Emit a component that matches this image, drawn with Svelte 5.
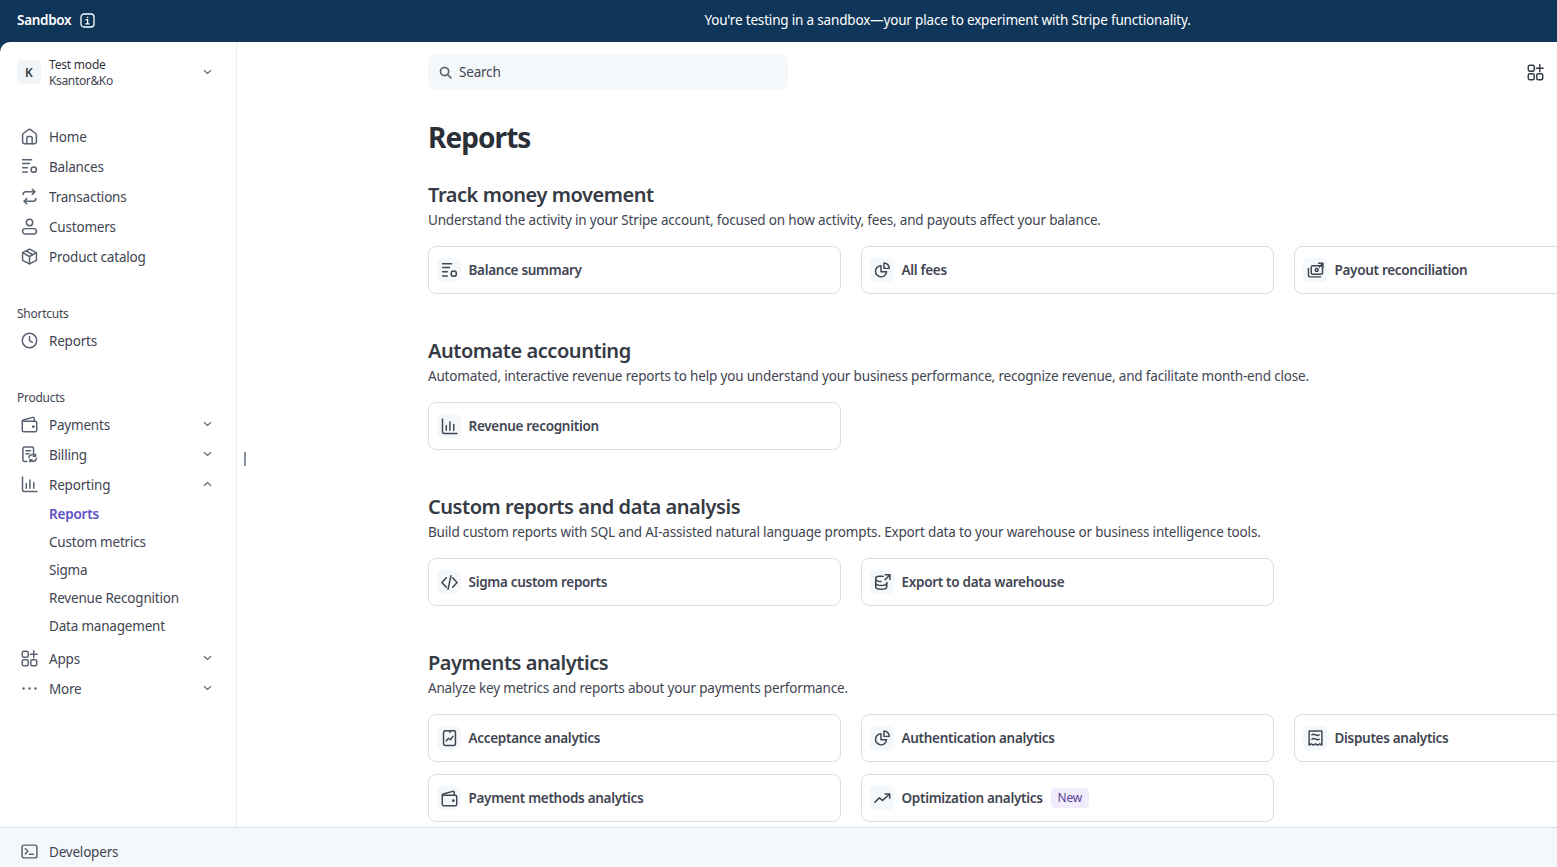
<script>
	const icons = {
		home: '<path d="M1.5 6.6a1.8 1.8 0 0 1 .7-1.4L7 1.5a1.6 1.6 0 0 1 2 0l4.8 3.7a1.8 1.8 0 0 1 .7 1.4V13a1.8 1.8 0 0 1-1.8 1.8H3.3A1.8 1.8 0 0 1 1.5 13Z"/><path d="M5.5 14.8V9.5A1.5 1.5 0 0 1 7 8h2a1.5 1.5 0 0 1 1.5 1.5v5.3"/>',
		balances: '<path d="M1.5 1.6h8.5M1.5 5.2h6.5M1.5 9.2h4.5M1.5 13.2h4.5"/><circle cx="12" cy="11" r="2.5"/>',
		transactions: '<path d="M2 6.2c0-1.6 1-2.6 2.6-2.6H13M10.6 1.2 13.2 3.6l-2.6 2.4M14 9.8c0 1.6-1 2.6-2.6 2.6H3M5.4 14.8 2.8 12.4l2.6-2.4"/>',
		customers: '<circle cx="8" cy="4.2" r="3"/><rect x="1.5" y="10" width="13" height="5" rx="2.5"/>',
		product: '<path d="M8 1 14.5 4.4v7.2L8 15 1.5 11.6V4.4L8 1Z"/><path d="M1.8 4.6 8 8l6.2-3.4M8 8v7M4.8 2.8l6.4 3.4"/>',
		clock: '<circle cx="8" cy="8" r="6.8"/><path d="M8 4.2V8.2l2.6 1.6"/>',
		wallet: '<path d="M1.2 5v8.3c0 .9.7 1.5 1.5 1.5h10.6c.8 0 1.5-.6 1.5-1.5V6.4c0-.8-.7-1.4-1.5-1.4H2.4"/><path d="M1.2 5c0-.6.4-1.1 1-1.3L11 1.3c.7-.2 1.5.3 1.5 1.1V5"/><circle cx="11.6" cy="10" r=".6" fill="currentColor"/>',
		billing: '<path d="M5.5 14.5H3.2a1.4 1.4 0 0 1-1.4-1.4V2.4A1.4 1.4 0 0 1 3.2 1h7.2a1.4 1.4 0 0 1 1.4 1.4v4.4"/><path d="M4.6 4.4h4.4M4.6 7.4h3"/><path d="M7.4 11a3.4 3.4 0 0 1 6-1.6M14.6 11.4a3.4 3.4 0 0 1-6 1.8M13.6 7.6v2h-2M8.4 15v-2h2"/>',
		reporting: '<path d="M1.4 1v12.2c0 .8.6 1.4 1.4 1.4H15M5 7v4.6M8.4 3.8v7.8M12 6v5.6"/>',
		apps: '<rect x="1.2" y="1.2" width="5.6" height="5.6" rx="1.4"/><rect x="1.2" y="9.2" width="5.6" height="5.6" rx="1.4"/><rect x="9.2" y="9.2" width="5.6" height="5.6" rx="1.4"/><path d="M12 .8v6.4M8.8 4h6.4"/>',
		fees: '<path d="M6.6 3.6a5.2 5.2 0 1 0 5.2 5.6H6.6V3.6Z"/><path d="M9.4 1a5 5 0 0 1 5 5H9.4V1Z"/>',
		payout: '<rect x="4" y="3.6" width="10.6" height="8" rx="1.4"/><circle cx="9.2" cy="7.6" r="1.4"/><path d="M1.4 6.2v6.4c0 .9.6 1.4 1.4 1.4h10M11 1.2h4v4M15 1.2l-3.4 3.4"/>',
		code: '<path d="M5 3.6.9 8 5 12.4M11 3.6 15.1 8 11 12.4M9.4 1.6 6.6 14.4"/>',
		warehouse: '<path d="M8.6 2.2H5C3 2.2 1.6 3.1 1.6 4.6V12c0 1.5 1.6 2.4 5.2 2.4s5.2-.9 5.2-2.4V8"/><path d="M1.6 4.6c0 1.5 1.6 2.4 5 2.4M1.6 8.4c0 1.5 1.6 2.4 5.2 2.4s5.2-.9 5.2-2.4M10.6.8H15v4.4M15 .8l-4.6 4.6"/>',
		acceptance: '<rect x="2.4" y=".6" width="11.2" height="14" rx="1.8"/><path d="M8.6.6v1.8M5 10.2l2-2.4 1.8 1.4L11.2 6"/>',
		disputes: '<path d="M2 1h12v13.2l-2-1.2-2 1.2-2-1.2-2 1.2-2-1.2-2 1.2V1Z"/><path d="M4.6 4.6c1.1-.8 2-.8 3.4 0s2.3.8 3.4 0M4.6 8.6c1.1-.8 2-.8 3.4 0s2.3.8 3.4 0"/>',
		trend: '<path d="M.8 11.6 5 7.4l3 2.4 6.4-5.6M10.4 3.8h4.4v4"/>',
		terminal: '<rect x="1" y="2" width="14" height="12" rx="2"/><path d="m4 5.4 2.6 2.4L4 10.2M8 10.6h3.6"/>'
	};

	const primary = [
		{ icon: 'home', label: 'Home' },
		{ icon: 'balances', label: 'Balances' },
		{ icon: 'transactions', label: 'Transactions' },
		{ icon: 'customers', label: 'Customers' },
		{ icon: 'product', label: 'Product catalog' }
	];

	const reportingLinks = ['Custom metrics', 'Sigma', 'Revenue Recognition', 'Data management'];

	const sections = [
		{
			title: 'Track money movement',
			desc: 'Understand the activity in your Stripe account, focused on how activity, fees, and payouts affect your balance.',
			cards: [
				{ icon: 'balances', label: 'Balance summary' },
				{ icon: 'fees', label: 'All fees' },
				{ icon: 'payout', label: 'Payout reconciliation' }
			]
		},
		{
			title: 'Automate accounting',
			desc: 'Automated, interactive revenue reports to help you understand your business performance, recognize revenue, and facilitate month-end close.',
			cards: [{ icon: 'reporting', label: 'Revenue recognition' }]
		},
		{
			title: 'Custom reports and data analysis',
			desc: 'Build custom reports with SQL and AI-assisted natural language prompts. Export data to your warehouse or business intelligence tools.',
			cards: [
				{ icon: 'code', label: 'Sigma custom reports' },
				{ icon: 'warehouse', label: 'Export to data warehouse' }
			]
		},
		{
			title: 'Payments analytics',
			desc: 'Analyze key metrics and reports about your payments performance.',
			cards: [
				{ icon: 'acceptance', label: 'Acceptance analytics' },
				{ icon: 'fees', label: 'Authentication analytics' },
				{ icon: 'disputes', label: 'Disputes analytics' },
				{ icon: 'wallet', label: 'Payment methods analytics' },
				{ icon: 'trend', label: 'Optimization analytics', badge: 'New' }
			]
		}
	];
</script>

{#snippet icon(name)}
	<svg class="icon" viewBox="0 0 16 16" fill="none" stroke="currentColor" stroke-width="1.4" stroke-linecap="round" stroke-linejoin="round">
		{@html icons[name]}
	</svg>
{/snippet}

{#snippet chevron(up)}
	<svg class="chev" viewBox="0 0 10 6" fill="none" stroke="currentColor" stroke-width="1.5" stroke-linecap="round" stroke-linejoin="round">
		<path d={up ? 'M1.5 4.6 5 1.4l3.5 3.2' : 'M1.5 1.4 5 4.6l3.5-3.2'} />
	</svg>
{/snippet}

{#snippet navItem(name, label, expand)}
	<div class="nav-item">
		<span class="nav-icon">{@render icon(name)}</span>
		<span class="nav-label">{label}</span>
		{#if expand}
			{@render chevron(expand === 'up')}
		{/if}
	</div>
{/snippet}

<div class="page">
	<header class="banner">
		<div class="banner-left">
			<strong>Sandbox</strong>
			<svg class="info" viewBox="0 0 15 15" fill="none" stroke="currentColor" stroke-width="1.3">
				<rect x="1" y="1" width="13" height="13" rx="3" />
				<path d="M5.6 6.6h2v4M5.4 10.8h4.2M7.6 3.7v1.2" />
			</svg>
		</div>
		<p>You're testing in a sandbox—your place to experiment with Stripe functionality.</p>
	</header>

	<div class="sheet">
		<div class="middle">
			<aside class="sidebar">
				<div class="account">
					<span class="avatar">K</span>
					<div class="account-text">
						<span class="mode">Test mode</span>
						<span class="org">Ksantor&amp;Ko</span>
					</div>
					{@render chevron(false)}
				</div>

				<nav class="group">
					{#each primary as item}
						{@render navItem(item.icon, item.label)}
					{/each}
				</nav>

				<div class="group-title shortcuts">Shortcuts</div>
				{@render navItem('clock', 'Reports')}

				<div class="group-title products">Products</div>
				{@render navItem('wallet', 'Payments', 'down')}
				{@render navItem('billing', 'Billing', 'down')}
				{@render navItem('reporting', 'Reporting', 'up')}
				<div class="subnav">
					<div class="sub active">Reports</div>
					{#each reportingLinks as link}
						<div class="sub">{link}</div>
					{/each}
				</div>
				{@render navItem('apps', 'Apps', 'down')}
				<div class="nav-item">
					<span class="nav-icon">
						<svg class="icon" viewBox="0 0 16 16" fill="currentColor"><circle cx="2.4" cy="8" r="1.1" /><circle cx="8" cy="8" r="1.1" /><circle cx="13.6" cy="8" r="1.1" /></svg>
					</span>
					<span class="nav-label">More</span>
					{@render chevron(false)}
				</div>
				<span class="handle"></span>
			</aside>

			<main class="content">
				<div class="topline">
					<div class="search">
						<svg viewBox="0 0 14 14" fill="none" stroke="currentColor" stroke-width="1.8" stroke-linecap="round"><circle cx="6" cy="6" r="4.4" /><path d="m9.4 9.4 3.4 3.4" /></svg>
						<span>Search</span>
					</div>
					<span class="apps-btn">{@render icon('apps')}</span>
				</div>

				<h1>Reports</h1>

				{#each sections as section}
					<section>
						<h2>{section.title}</h2>
						<p class="desc">{section.desc}</p>
						<div class="cards">
							{#each section.cards as card}
								<div class="card">
									<span class="card-icon">{@render icon(card.icon)}</span>
									<span class="card-label">{card.label}</span>
									{#if card.badge}
										<span class="badge">{card.badge}</span>
									{/if}
								</div>
							{/each}
						</div>
					</section>
				{/each}
			</main>
		</div>

		<footer class="devbar">
			<span class="nav-icon">{@render icon('terminal')}</span>
			<span class="dev-label">Developers</span>
		</footer>
	</div>
</div>

<style>
	:global(body) {
		margin: 0;
		background: #0f3558;
		font-family: 'Noto Sans', 'Open Sans', sans-serif;
		font-size: 14px;
		color: #414552;
	}
	.page {
		display: flex;
		flex-direction: column;
		height: 867px;
		overflow: hidden;
	}
	.banner {
		flex: 0 0 42px;
		display: flex;
		align-items: center;
		position: relative;
		padding: 0 0 2px 17px;
		color: #fff;
		font-size: 13.5px;
		box-sizing: border-box;
	}
	.banner-left {
		display: flex;
		align-items: center;
		gap: 9px;
	}
	.banner-left strong {
		font-weight: 600;
		letter-spacing: -0.3px;
	}
	.info {
		width: 15px;
		height: 15px;
	}
	.banner p {
		margin: 0;
		position: absolute;
		left: 0;
		right: 0;
		padding-left: 338px;
		text-align: center;
		letter-spacing: -0.175px;
	}
	.sheet {
		flex: 1;
		min-height: 0;
		display: flex;
		flex-direction: column;
		background: #fff;
		border-top-left-radius: 10px;
	}
	.middle {
		flex: 1;
		min-height: 0;
		display: flex;
		overflow: hidden;
	}
	.sidebar {
		flex: 0 0 236px;
		box-sizing: content-box;
		position: relative;
		border-right: 1px solid #ebeef1;
		padding-top: 14px;
	}
	.account {
		display: flex;
		align-items: center;
		height: 32px;
		padding: 0 24px 0 17px;
	}
	.avatar {
		flex: 0 0 24px;
		height: 24px;
		border-radius: 5px;
		background: #f2f5f8;
		display: flex;
		align-items: center;
		justify-content: center;
		font-size: 12px;
		font-weight: 600;
		margin-right: 8px;
		color: #353a44;
	}
	.account-text {
		flex: 1;
		display: flex;
		flex-direction: column;
		font-size: 12px;
		line-height: 16px;
		letter-spacing: -0.2px;
		padding-top: 2px;
	}
	.mode {
		color: #30313d;
	}
	.org {
		letter-spacing: -0.35px;
	}
	.chev {
		flex: none;
		width: 9px;
		height: 6px;
		color: #6c7688;
	}
	.group {
		margin-top: 33px;
	}
	.nav-item {
		display: flex;
		align-items: center;
		height: 30px;
		padding: 0 24px 0 20.5px;
	}
	.nav-icon {
		flex: 0 0 28.5px;
		display: flex;
		color: #596171;
	}
	.icon {
		width: 17px;
		height: 17px;
	}
	.nav-label {
		flex: 1;
		font-size: 13.5px;
		letter-spacing: -0.2px;
		padding-top: 2px;
	}
	.dev-label {
		font-size: 13.5px;
		letter-spacing: -0.2px;
	}
	.group-title {
		padding-left: 17px;
		font-size: 12px;
		line-height: 16px;
		letter-spacing: -0.25px;
	}
	.shortcuts {
		margin-top: 35px;
		margin-bottom: 3px;
	}
	.products {
		margin-top: 35px;
		margin-bottom: 3px;
	}
	.subnav {
		padding: 1px 0 3px 49px;
	}
	.sub {
		height: 28px;
		line-height: 28px;
		font-size: 13.5px;
		letter-spacing: -0.2px;
	}
	.sub.active {
		color: #5e50c8;
		font-weight: 600;
	}
	.handle {
		position: absolute;
		left: 244px;
		top: 410px;
		width: 2px;
		height: 14px;
		background: #8792a2;
	}
	.content {
		flex: 1;
		min-width: 0;
		padding-left: 191px;
		padding-top: 12px;
		overflow: hidden;
	}
	.topline {
		display: flex;
		align-items: center;
		justify-content: space-between;
		padding-right: 13px;
	}
	.search {
		width: 360px;
		height: 36px;
		border-radius: 8px;
		background: #f5f8fa;
		display: flex;
		align-items: center;
		gap: 7px;
		padding-left: 11px;
		box-sizing: border-box;
		font-size: 13.5px;
		letter-spacing: -0.2px;
		color: #414552;
	}
	.search svg {
		width: 13px;
		height: 13px;
		color: #596171;
	}
	.apps-btn {
		display: flex;
		color: #353a44;
	}
	h1 {
		margin: 27px 0 0;
		font-size: 28px;
		line-height: 40px;
		font-weight: 700;
		color: #2b2f38;
		letter-spacing: -0.93px;
	}
	section {
		margin-bottom: 43px;
	}
	h1 + section {
		margin-top: 24px;
	}
	h2 {
		margin: 0;
		font-size: 20px;
		line-height: 28px;
		font-weight: 600;
		letter-spacing: -0.45px;
		color: #353a44;
	}
	.desc {
		margin: 0 0 15px;
		font-size: 13.5px;
		line-height: 22px;
		letter-spacing: -0.175px;
		color: #414552;
		white-space: nowrap;
	}
	.cards {
		display: grid;
		grid-template-columns: repeat(3, 413px);
		gap: 12px 20px;
	}
	.card {
		height: 48px;
		box-sizing: border-box;
		border: 1px solid #d8dee4;
		border-radius: 8px;
		display: flex;
		align-items: center;
		padding-left: 8px;
		background: #fff;
	}
	.card-icon {
		flex: 0 0 24px;
		height: 24px;
		border-radius: 5px;
		background: #f5f8fa;
		display: flex;
		align-items: center;
		justify-content: center;
		color: #414552;
		margin-right: 7.5px;
	}
	.card-label {
		font-size: 13.5px;
		font-weight: 600;
		color: #414552;
		letter-spacing: -0.3px;
	}
	.badge {
		margin-left: 8px;
		padding: 0 7px;
		height: 20px;
		line-height: 20px;
		font-size: 12px;
		border-radius: 4px;
		color: #5a3e99;
		background: #f1ecfb;
		letter-spacing: -0.2px;
	}
	.devbar {
		flex: 0 0 40px;
		box-sizing: border-box;
		background: #f5f8fa;
		border-top: 1px solid #d8dee4;
		display: flex;
		align-items: center;
		padding: 8px 0 0 20.5px;
	}
</style>
